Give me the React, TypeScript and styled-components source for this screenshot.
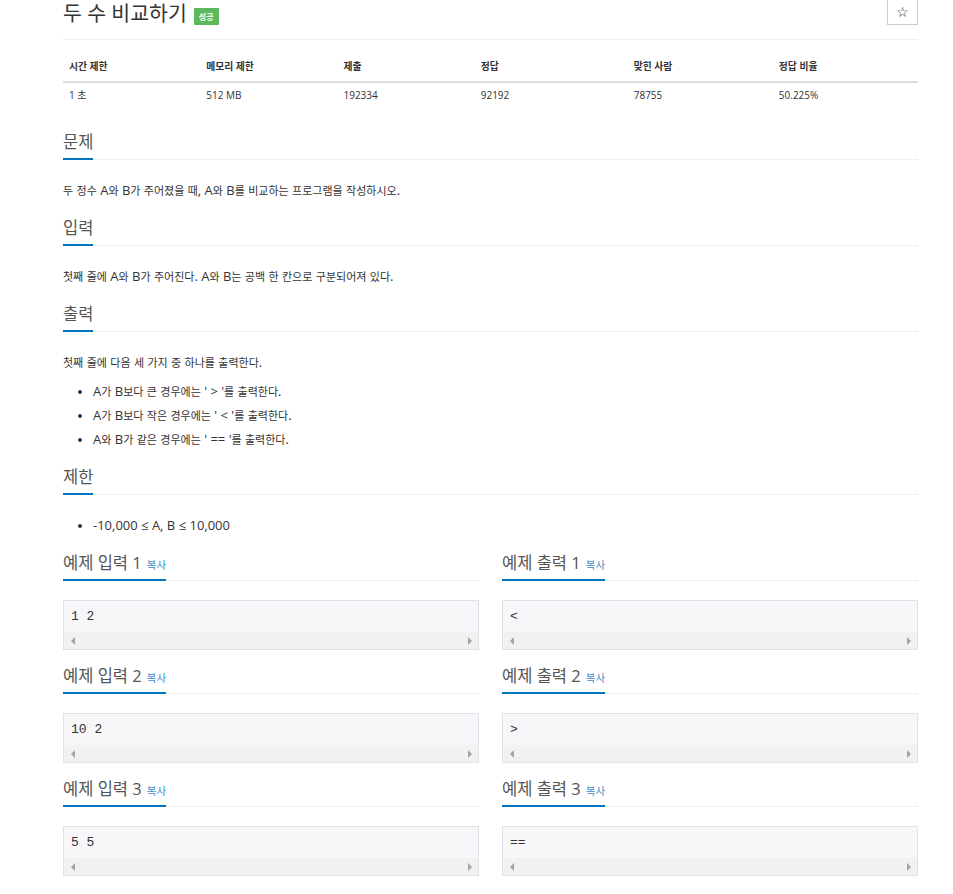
import React from "react"
import styled, { createGlobalStyle } from "styled-components"

const GlobalStyle = createGlobalStyle`
body {
  margin: 0;
  background: #fff;
  font-family: "Open Sans", "Noto Sans CJK KR", sans-serif;
  color: #333;
}
`

const Page = styled.main`
width: 855px;
margin-left: 63px;
padding-bottom: 20px;
`

const TitleRow = styled.header`
display: flex;
justify-content: space-between;
align-items: flex-start;
height: 39px;
border-bottom: 1px solid #eee;
`

const TitleLeft = styled.div`
display: flex;
align-items: flex-start;
`

const Title = styled.h1`
margin: 0;
font-size: 20.5px;
font-weight: 400;
line-height: 26px;
color: #333;
`

const Badge = styled.span`
margin: 8px 0 0 7px;
background: #5cb85c;
color: #fff;
font-size: 8px;
font-weight: 700;
line-height: 17px;
padding: 0 5px;
border-radius: 1px;
`

const StarButton = styled.button`
margin-top: -6px;
width: 31px;
height: 31px;
border: 1px solid #ccc;
background: #fff;
font-family: "DejaVu Sans", sans-serif;
font-size: 14px;
color: #222;
padding: 4px 0 0;
`

const InfoTable = styled.table`
width: 100%;
margin-top: 13px;
border-collapse: collapse;
table-layout: fixed;
`

const Th = styled.th<{ $w: number }>`
width: ${p => p.$w}%;
text-align: left;
font-size: 9.8px;
font-weight: 700;
line-height: 12px;
padding: 8px 6px;
border-bottom: 2px solid #ddd;
color: #333;
`

const Td = styled.td`
font-size: 10px;
line-height: 12px;
padding: 6px;
color: #333;
`

const Section = styled.section<{ $gap?: number }>`
margin-top: ${p => p.$gap ?? 15}px;
`

const HeadRow = styled.div`
display: flex;
align-items: flex-end;
`

const Headline = styled.h2`
margin: 0;
font-size: 16.5px;
font-weight: 400;
line-height: 24px;
color: #555;
padding-bottom: 4px;
border-bottom: 2px solid #0076c0;
white-space: nowrap;
`

const CopyLink = styled.a`
font-size: 10.5px;
line-height: 1;
color: #428bca;
margin-left: 5px;
text-decoration: none;
`

const HeadFill = styled.div`
flex: 1;
border-bottom: 1px dotted #ddd;
`

const Content = styled.div`
margin-top: 21px;
font-size: 11px;
line-height: 20px;
`

const Para = styled.p`
margin: 0 0 9px;
&:last-child {
  margin-bottom: 0;
}
`

const Latin = styled.span`
font-size: 13px;
line-height: 1;
`

const List = styled.ul`
margin: 0;
padding-left: 30px;
`

const Item = styled.li`
line-height: 20px;
& + & {
  margin-top: 4px;
}
`

const SampleGrid = styled.div`
display: grid;
grid-template-columns: 1fr 1fr;
column-gap: 23px;
row-gap: 14px;
margin-top: 15px;
`

const SampleBox = styled.div`
margin-top: 19px;
border: 1px solid #e1e1e8;
background: #f7f7f9;
`

const Code = styled.pre`
margin: 0;
padding: 8px 7px;
font-family: "Liberation Mono", monospace;
font-size: 13px;
line-height: 15px;
color: #333;
`

const Scrollbar = styled.div`
height: 17px;
background: #f1f1f1;
display: flex;
align-items: center;
justify-content: space-between;
padding: 0 6px 0 7px;
`

const Arrow = styled.span<{ $dir: "left" | "right" }>`
width: 0;
height: 0;
border-top: 4px solid transparent;
border-bottom: 4px solid transparent;
${p => p.$dir === "left"
    ? "border-right: 4px solid #a3a3a3;"
    : "border-left: 4px solid #a3a3a3;"}
`

const cols = [
    { name: "시간 제한", w: 16, v: "1 초" },
    { name: "메모리 제한", w: 16, v: "512 MB" },
    { name: "제출", w: 16, v: "192334" },
    { name: "정답", w: 18, v: "92192" },
    { name: "맞힌 사람", w: 17, v: "78755" },
    { name: "정답 비율", w: 17, v: "50.225%" },
]

const samples = [
    { title: "예제 입력 1", code: "1 2" },
    { title: "예제 출력 1", code: "<" },
    { title: "예제 입력 2", code: "10 2" },
    { title: "예제 출력 2", code: ">" },
    { title: "예제 입력 3", code: "5 5" },
    { title: "예제 출력 3", code: "==" },
]

// latin runs are set a bit larger than hangul, like the original page font
const Mixed = ({ text }: { text: string }) => (
    <>
        {text.split(/([\x20-\x7E≤]+)/).map((part, i) =>
            i % 2 === 1 ? <Latin key={i}>{part}</Latin> : part
        )}
    </>
)

const Heading = ({ children, copy }: { children: React.ReactNode; copy?: boolean }) => (
    <HeadRow>
        <Headline>
            {children}
            {copy && <CopyLink href="#">복사</CopyLink>}
        </Headline>
        <HeadFill />
    </HeadRow>
)

const App = () => {
    return (
        <>
            <GlobalStyle />
            <Page>
                <TitleRow>
                    <TitleLeft>
                        <Title>두 수 비교하기</Title>
                        <Badge>성공</Badge>
                    </TitleLeft>
                    <StarButton>☆</StarButton>
                </TitleRow>

                <InfoTable>
                    <thead>
                        <tr>
                            {cols.map(c => <Th key={c.name} $w={c.w}>{c.name}</Th>)}
                        </tr>
                    </thead>
                    <tbody>
                        <tr>
                            {cols.map(c => <Td key={c.name}>{c.v}</Td>)}
                        </tr>
                    </tbody>
                </InfoTable>

                <Section $gap={23}>
                    <Heading>문제</Heading>
                    <Content>
                        <Para><Mixed text="두 정수 A와 B가 주어졌을 때, A와 B를 비교하는 프로그램을 작성하시오." /></Para>
                    </Content>
                </Section>

                <Section>
                    <Heading>입력</Heading>
                    <Content>
                        <Para><Mixed text="첫째 줄에 A와 B가 주어진다. A와 B는 공백 한 칸으로 구분되어져 있다." /></Para>
                    </Content>
                </Section>

                <Section>
                    <Heading>출력</Heading>
                    <Content>
                        <Para><Mixed text="첫째 줄에 다음 세 가지 중 하나를 출력한다." /></Para>
                        <List>
                            <Item><Mixed text="A가 B보다 큰 경우에는 ' > '를 출력한다." /></Item>
                            <Item><Mixed text="A가 B보다 작은 경우에는 ' < '를 출력한다." /></Item>
                            <Item><Mixed text="A와 B가 같은 경우에는 ' == '를 출력한다." /></Item>
                        </List>
                    </Content>
                </Section>

                <Section>
                    <Heading>제한</Heading>
                    <Content>
                        <List>
                            <Item><Mixed text="-10,000 ≤ A, B ≤ 10,000" /></Item>
                        </List>
                    </Content>
                </Section>

                <SampleGrid>
                    {samples.map(s => (
                        <section key={s.title}>
                            <Heading copy>{s.title}</Heading>
                            <SampleBox>
                                <Code>{s.code}</Code>
                                <Scrollbar>
                                    <Arrow $dir="left" />
                                    <Arrow $dir="right" />
                                </Scrollbar>
                            </SampleBox>
                        </section>
                    ))}
                </SampleGrid>
            </Page>
        </>
    )
}

export default App
